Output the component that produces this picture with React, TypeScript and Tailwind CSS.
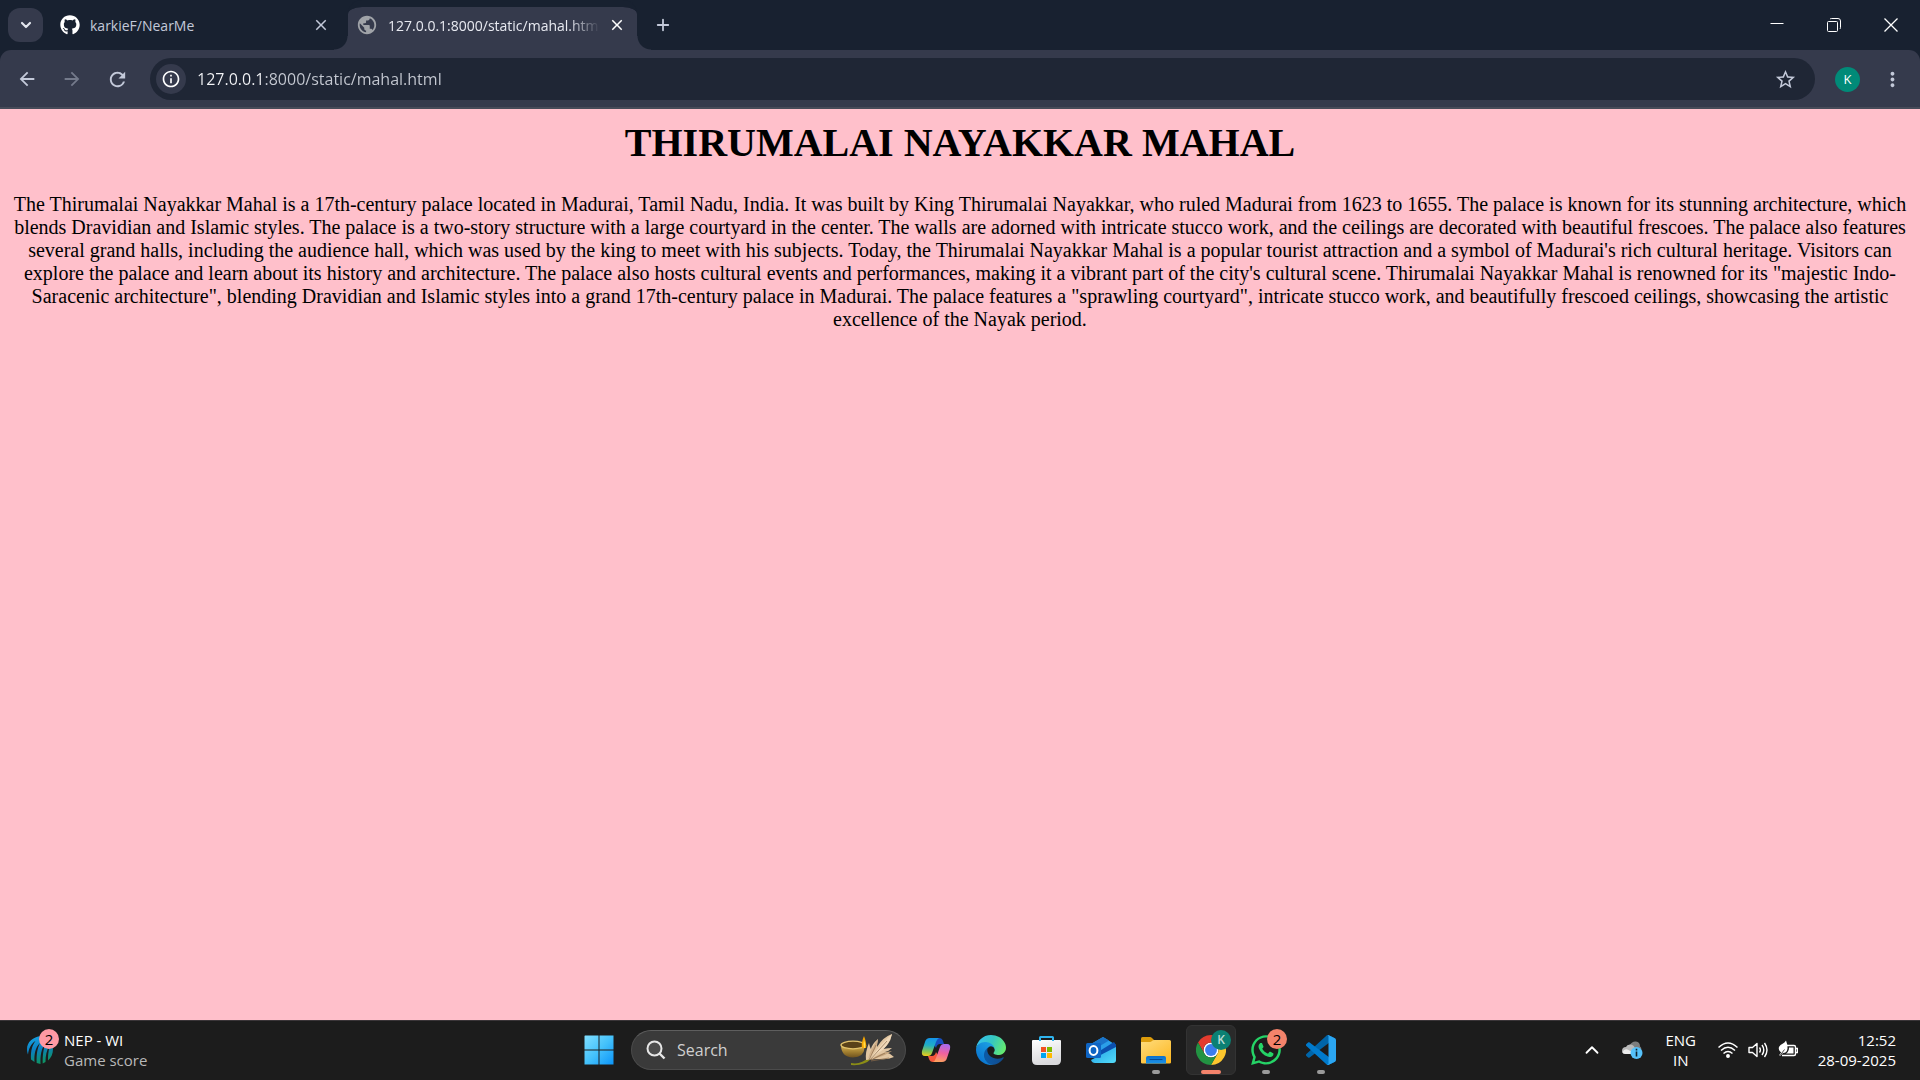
import React from "react";
import { FaGithub, FaWhatsapp } from "react-icons/fa";
import {
  MdArrowBack,
  MdArrowForward,
  MdClose,
  MdInfoOutline,
  MdMoreVert,
  MdPublic,
  MdRefresh,
  MdStarBorder,
} from "react-icons/md";
import { ChevronDown, ChevronUp, Plus } from "lucide-react";

function TabStrip() {
  return (
    <header className="flex h-[50px] items-center bg-[#182130] pl-2 text-[#c3c9d9]">
      <button
        aria-label="Search tabs"
        className="flex h-[34px] w-[35px] shrink-0 items-center justify-center rounded-xl bg-[#353a4c] text-[#e3e6ee]"
      >
        <ChevronDown size={16} strokeWidth={3.2} />
      </button>

      <div className="ml-[17px] flex w-[288px] items-center">
        <FaGithub size={20} className="shrink-0 text-white" />
        <span className="ml-[10px] flex-1 pt-0.5 text-[14px] leading-5">karkieF/NearMe</span>
        <button aria-label="Close karkieF/NearMe" className="mr-[18px]">
          <MdClose size={18} />
        </button>
      </div>

      <div className="relative flex w-[289px] items-center self-stretch rounded-t-[14px] border-t-[7px] border-[#182130] bg-[#353a4c] bg-clip-padding pb-[7px] pl-2 text-white">
        <span className="absolute -left-[14px] bottom-0 h-[14px] w-[14px] bg-[radial-gradient(circle_at_0_0,transparent_13px,#353a4c_14px)]" />
        <span className="absolute -right-[14px] bottom-0 h-[14px] w-[14px] bg-[radial-gradient(circle_at_100%_0,transparent_13px,#353a4c_14px)]" />
        <MdPublic size={22} className="shrink-0 text-[#a0a3a8]" />
        <span className="ml-[10px] w-[210px] overflow-hidden pt-0.5 text-[14px] leading-5 whitespace-nowrap text-[#e8eaf1] [mask-image:linear-gradient(90deg,#000_180px,transparent_212px)]">
          127.0.0.1:8000/static/mahal.html
        </span>
        <button aria-label="Close 127.0.0.1:8000" className="ml-[10px]">
          <MdClose size={18} />
        </button>
      </div>

      <button aria-label="New tab" className="ml-4 flex h-8 w-5 items-center justify-center">
        <Plus size={18} strokeWidth={2.4} />
      </button>

      <div className="ml-auto flex self-stretch pr-px text-white">
        <button aria-label="Minimize" className="flex w-[57px] items-center justify-center">
          <svg width="14" height="14" viewBox="0 0 14 14" className="mb-1">
            <path d="M0.5 7.5h13" stroke="currentColor" />
          </svg>
        </button>
        <button aria-label="Restore" className="flex w-[57px] items-center justify-center">
          <svg width="14" height="14" viewBox="0 0 14 14" fill="none" stroke="currentColor">
            <rect x="0.5" y="3.5" width="10" height="10" rx="1" />
            <path d="M3 1.2Q3.4 0.5 4.5 0.5H11Q13.5 0.5 13.5 3V9.5Q13.5 10.6 12.8 11" />
          </svg>
        </button>
        <button aria-label="Close window" className="flex w-[57px] items-center justify-center">
          <svg width="14" height="14" viewBox="0 0 14 14" stroke="currentColor" strokeWidth="1.3">
            <path d="M0.5 0.5l13 13M13.5 0.5l-13 13" />
          </svg>
        </button>
      </div>
    </header>
  );
}

function Toolbar() {
  return (
    <div className="bg-[#182130]">
      <nav className="flex items-center rounded-t-[11px] border-b-2 border-[#474b59] bg-[#353a4c] pt-2 pr-4 pb-[7px] pl-4 text-[#c3c9d9]">
        <button aria-label="Back" className="w-[45px]">
          <MdArrowBack size={22} />
        </button>
        <button aria-label="Forward" className="w-[45px] text-[#747a8b]">
          <MdArrowForward size={22} />
        </button>
        <button aria-label="Reload" className="w-[44px]">
          <MdRefresh size={23} />
        </button>
        <div className="flex h-[42px] flex-1 items-center rounded-full bg-[#1f2635] pr-[18px] pl-[6px]">
          <button
            aria-label="Site information"
            className="flex h-[30px] w-[30px] items-center justify-center rounded-full bg-[#353a4c] text-white"
          >
            <MdInfoOutline size={20} />
          </button>
          <input
            aria-label="Address"
            defaultValue="127.0.0.1:8000/static/mahal.html"
            className="ml-[11px] min-w-0 flex-1 bg-[linear-gradient(90deg,#f4f5f8_66px,#c6cad3_66px)] bg-clip-text text-[16px] leading-6 text-transparent outline-none"
          />
          <button aria-label="Bookmark this page">
            <MdStarBorder size={23} />
          </button>
        </div>
        <button
          aria-label="Profile"
          className="ml-5 flex h-[25px] w-[25px] items-center justify-center rounded-full bg-[#018a78] text-[13px] leading-none text-white"
        >
          K
        </button>
        <button aria-label="Menu" className="ml-[21px]">
          <MdMoreVert size={23} />
        </button>
      </nav>
    </div>
  );
}

function Page() {
  return (
    <main className="flex-1 bg-[#ffc0cb] px-[10px] pt-[11px] text-center font-['Liberation_Serif',serif] text-black">
      <h1 className="text-[40px] leading-[46px] font-bold">THIRUMALAI NAYAKKAR MAHAL</h1>
      <p className="mt-[27px] text-[20px] leading-[23px]">
        The Thirumalai Nayakkar Mahal is a 17th-century palace located in Madurai, Tamil Nadu, India. It was built by
        King Thirumalai Nayakkar, who ruled Madurai from 1623 to 1655. The palace is known for its stunning
        architecture, which blends Dravidian and Islamic styles. The palace is a two-story structure with a large
        courtyard in the center. The walls are adorned with intricate stucco work, and the ceilings are decorated with
        beautiful frescoes. The palace also features several grand halls, including the audience hall, which was used
        by the king to meet with his subjects. Today, the Thirumalai Nayakkar Mahal is a popular tourist attraction and
        a symbol of Madurai's rich cultural heritage. Visitors can explore the palace and learn about its history and
        architecture. The palace also hosts cultural events and performances, making it a vibrant part of the city's
        cultural scene. Thirumalai Nayakkar Mahal is renowned for its "majestic Indo-Saracenic architecture", blending
        Dravidian and Islamic styles into a grand 17th-century palace in Madurai. The palace features a "sprawling
        courtyard", intricate stucco work, and beautifully frescoed ceilings, showcasing the artistic excellence of the
        Nayak period.
      </p>
    </main>
  );
}

function CricketIcon() {
  return (
    <svg width="28" height="30" viewBox="0 0 28 30">
      <defs>
        <linearGradient id="cricket" x1="0.2" y1="0" x2="0.5" y2="1">
          <stop offset="0" stopColor="#16a5e6" />
          <stop offset="0.5" stopColor="#0b7fc0" />
          <stop offset="1" stopColor="#0e9460" />
        </linearGradient>
      </defs>
      <path
        fill="url(#cricket)"
        d="M15 1C7 2 1 7 1 14c0 2 .3 4 1 5.500C2.500 14 5 8.500 9.500 6 6.500 10 4.500 15 5 24.500l3.500 2.500C8 19 9.500 12 14 8c-2.500 5-3.700 11-3.300 20l3.800 1C14 21 15.500 13 19 9c-1.500 6-2.500 11-2.300 19.500l2.800-1.500C19.500 21 20.500 15 23.500 11c-.8 5-1.500 8-1.500 14.500C25 23 27 19 27 14 27 6 22 0 15 1Z"
      />
    </svg>
  );
}

function StartIcon() {
  return (
    <svg width="30" height="30" viewBox="0 0 30 30">
      <defs>
        <linearGradient id="start" gradientUnits="userSpaceOnUse" x1="0" y1="0" x2="30" y2="30">
          <stop offset="0" stopColor="#83e0ff" />
          <stop offset="0.5" stopColor="#45c2fb" />
          <stop offset="1" stopColor="#0a93f8" />
        </linearGradient>
      </defs>
      <path fill="url(#start)" d="M1 .5h13.500v14H.5V1zM15.500 .5h14v14h-14zM.5 15.500h14v14H.5zM15.500 15.500h14v14h-14z" />
    </svg>
  );
}

function LampIcon() {
  return (
    <svg width="58" height="32" viewBox="0 0 58 32">
      <defs>
        <linearGradient id="bowl" x1="0" y1="0" x2="0" y2="1">
          <stop offset="0" stopColor="#dcb653" />
          <stop offset="0.6" stopColor="#9c7a2e" />
          <stop offset="1" stopColor="#70531f" />
        </linearGradient>
      </defs>
      <path d="M12 29q10 2 18-6l2 2q-7 7-20 6z" fill="#8b8d16" />
      <g fill="#e2c6a2">
        <path d="M27 26q-1-8 3-17 1 5 2 6 1-5 7-10-1 5-1 8 6-10 15-13-1 6-4 10l-5 5q5-1 9-1-3 3-7 4 5 1 9 5-7 3-14 2-8 0-14 1z" />
        <path d="M29 25q2-9 10-20-1 8-4 12z" fill="#cfae88" />
        <path d="M32 25q4-9 21-25-4 14-14 19z" fill="#f0d9ba" />
        <path d="M32 26q8-7 21-9-8 5-13 6z" fill="#c7a57d" />
      </g>
      <path d="M30 26l7-15M31 26l17-19M32 26l14-7M32 27l18-3" stroke="#8d6b4b" strokeWidth=".7" />
      <path d="M2 11q0 12 12 12.500Q25 23 25.500 14l2-2.500z" fill="url(#bowl)" />
      <ellipse cx="14" cy="11" rx="12" ry="3.800" fill="#594219" stroke="#e3c46c" strokeWidth="1.300" />
      <path d="M23 14q-1-5 2-12 3 8 2 12z" fill="#f9a800" />
      <path d="M25 14q-1-4 0-8 2 4 1 8z" fill="#ffdf52" />
    </svg>
  );
}

function CopilotIcon() {
  return (
    <svg width="30" height="28" viewBox="0 0 30 28">
      <defs>
        <linearGradient id="copBlue" x1="0.4" y1="0" x2="0.3" y2="1">
          <stop offset="0" stopColor="#1595e8" />
          <stop offset="0.4" stopColor="#21aec4" />
          <stop offset="0.75" stopColor="#86c553" />
          <stop offset="1" stopColor="#eecb1c" />
        </linearGradient>
        <linearGradient id="copPink" x1="0.6" y1="0" x2="0.4" y2="1">
          <stop offset="0" stopColor="#a86af0" />
          <stop offset="0.5" stopColor="#f0619f" />
          <stop offset="1" stopColor="#fba05e" />
        </linearGradient>
      </defs>
      <path d="M15 2h3q3 0 4 3l1 3h-4q-3 0-4 4l-3-5z" fill="#174ebf" />
      <path d="M15 26h-3q-3 0-4-3l-1-3h4q3 0 4-4l3 5z" fill="#f4573d" />
      <path d="M9 2h9q-2 1-3 4l-4 11q-1 3-4 3H4q-4 0-3-5L4 6q1-4 5-4Z" fill="url(#copBlue)" />
      <path d="M21 26h-9q2-1 3-4l4-11q1-3 4-3h3q4 0 3 5l-3 9q-1 4-5 4Z" fill="url(#copPink)" />
    </svg>
  );
}

function EdgeIcon() {
  return (
    <svg width="30" height="30" viewBox="0 0 256 256">
      <defs>
        <linearGradient id="edgeDark" x1="0.2" y1="0.5" x2="1" y2="0.5">
          <stop offset="0" stopColor="#0c59a4" />
          <stop offset="1" stopColor="#114a8b" />
        </linearGradient>
        <linearGradient id="edgeBlue" x1="0.8" y1="0.2" x2="0.3" y2="0.9">
          <stop offset="0" stopColor="#1b9de2" />
          <stop offset="1" stopColor="#0b76d0" />
        </linearGradient>
        <linearGradient id="edgeGreen" x1="0" y1="0.3" x2="1" y2="0.6">
          <stop offset="0" stopColor="#35c1f1" />
          <stop offset="0.5" stopColor="#36c7c0" />
          <stop offset="1" stopColor="#66eb6e" />
        </linearGradient>
      </defs>
      <g transform="translate(-4.630 -4.920)">
        <path
          fill="url(#edgeDark)"
          d="M235.680 195.460a93.730 93.730 0 0 1-10.540 4.710 101.870 101.870 0 0 1-35.900 6.460c-47.320 0-88.540-32.550-88.540-74.320A31.480 31.480 0 0 1 117.130 105c-42.800 1.800-53.800 46.400-53.800 72.530 0 73.880 68.090 81.370 82.760 81.370 7.910 0 19.840-2.300 27-4.560l1.310-.44a128.340 128.340 0 0 0 66.600-52.800 4 4 0 0 0-5.320-5.640Z"
        />
        <path
          fill="url(#edgeBlue)"
          d="M114.970 251.260A79.200 79.200 0 0 1 92.230 229.920 80.720 80.720 0 0 1 117.130 105c3.120-1.470 8.450-4.130 15.540-4a32.350 32.350 0 0 1 25.690 13 31.880 31.880 0 0 1 6.360 18.660c0-.21 24.460-79.600-80-79.600-43.900 0-80 41.660-80 78.210a130.150 130.150 0 0 0 12.110 56 128 128 0 0 0 156.380 67.110 75.550 75.550 0 0 1-58.240-3.120Z"
        />
        <path
          fill="url(#edgeGreen)"
          d="M156.940 153.780c-.81 1.050-3.300 2.500-3.300 5.660 0 2.610 1.700 5.120 4.720 7.230 14.380 10 41.490 8.680 41.560 8.680a59.560 59.560 0 0 0 30.270-8.350 61.380 61.380 0 0 0 30.430-52.880c.26-22.410-8-37.310-11.340-43.910C228.090 28.760 182.350 4.920 132.610 4.920a128 128 0 0 0-128 126.200c.48-36.540 36.800-66.050 80-66.050 3.500 0 23.460.34 42 10.070 16.340 8.580 24.900 18.940 30.850 29.210 6.180 10.670 7.280 24.150 7.280 29.520s-2.740 13.330-7.800 19.910Z"
        />
      </g>
    </svg>
  );
}

function StoreIcon() {
  return (
    <svg width="30" height="30" viewBox="0 0 30 30">
      <defs>
        <linearGradient id="bag" x1="0" y1="0" x2="0.3" y2="1">
          <stop offset="0" stopColor="#ffffff" />
          <stop offset="1" stopColor="#d9d9dc" />
        </linearGradient>
      </defs>
      <path d="M1 6q0-1 1-1h27q1 0 1 1v19q0 5-5 5H6q-5 0-5-5z" fill="url(#bag)" />
      <path d="M9 6V2.500Q9 2 9.500 2h12q.5 0 .5.500V6" fill="none" stroke="#2fb4ee" strokeWidth="2" />
      <path d="M10 12h5v5h-5z" fill="#f25022" />
      <path d="M16 12h5v5h-5z" fill="#7fba00" />
      <path d="M10 18h5v5h-5z" fill="#00a4ef" />
      <path d="M16 18h5v5h-5z" fill="#ffb900" />
    </svg>
  );
}

function OutlookIcon() {
  return (
    <svg width="30" height="30" viewBox="0 0 30 30">
      <defs>
        <linearGradient id="mail" x1="0" y1="0" x2="1" y2="1">
          <stop offset="0" stopColor="#1f9de5" />
          <stop offset="1" stopColor="#54dcf8" />
        </linearGradient>
      </defs>
      <path d="M5 9 17 2l13 8v4L12 22 5 18z" fill="#2b9fe8" />
      <path d="M17 2l6 3.500L8 14.500 5 9z" fill="#1a73c9" />
      <path d="M28 7l2 3v4L15 23l-3-6z" fill="#0b4fae" />
      <path d="M30 12v13q0 3-3 3H9q-3 0-4-3z" fill="url(#mail)" />
      <rect x="0" y="8" width="15" height="15" rx="1.500" fill="#0f65c4" />
      <ellipse cx="7.500" cy="15.500" rx="3.900" ry="4.400" fill="none" stroke="#fff" strokeWidth="2" />
    </svg>
  );
}

function FolderIcon() {
  return (
    <svg width="30" height="30" viewBox="0 0 30 30">
      <defs>
        <linearGradient id="folder" x1="0" y1="0" x2="0.8" y2="1">
          <stop offset="0" stopColor="#ffdc7d" />
          <stop offset="1" stopColor="#fdb925" />
        </linearGradient>
        <linearGradient id="tray" x1="0" y1="0" x2="0" y2="1">
          <stop offset="0" stopColor="#0f6fc9" />
          <stop offset="1" stopColor="#1b93e8" />
        </linearGradient>
      </defs>
      <path d="M0 3.500Q0 2 1.500 2H9q1 0 2 1l2 2v6H0z" fill="#dd9c0b" />
      <path d="M0 7h9q1 0 2-1l1-.7Q12.500 5 13.500 5h15Q30 5 30 6.500v21q0 1-1.500 1h-27Q0 28.500 0 27.500z" fill="url(#folder)" />
      <path d="M5 28.500V23q0-2 2-2h16q2 0 2 2v5.500z" fill="url(#tray)" />
      <path d="M9 24.500h12" stroke="#084a94" strokeWidth="1.200" strokeLinecap="round" />
    </svg>
  );
}

function ChromeIcon() {
  return (
    <svg width="30" height="30" viewBox="0 0 48 48">
      <circle cx="24" cy="24" r="12" fill="#fff" />
      <path
        fill="#e33b2e"
        d="M24 12H44.781a23.994 23.994 0 0 0-41.564.003L13.608 30l.009-.002A11.985 11.985 0 0 1 24 12Z"
      />
      <path
        fill="#fcc62d"
        d="M34.391 30.003 24.001 48A23.994 23.994 0 0 0 44.780 12.003H23.999l-.003.009A11.985 11.985 0 0 1 34.391 30.003Z"
      />
      <path
        fill="#229342"
        d="M13.609 30.003 3.218 12.006A23.994 23.994 0 0 0 24.003 48L34.393 30.003l-.007-.007a11.985 11.985 0 0 1-20.778.007Z"
      />
      <circle cx="24" cy="24" r="9.500" fill="#3b7ded" />
    </svg>
  );
}

function CodeIcon() {
  return (
    <svg width="30" height="30" viewBox="0 0 100 100">
      <path
        fill="#0065a9"
        d="M96.461 10.796L75.857.876C73.472-.273 70.622.212 68.750 2.083L1.299 63.583C-.516 65.237-.514 68.094 1.303 69.745L6.813 74.754C8.298 76.104 10.535 76.204 12.134 74.991L93.361 13.370C96.086 11.303 100 13.246 100 16.667V16.428C100 14.027 98.625 11.838 96.461 10.796Z"
      />
      <path
        fill="#007acc"
        d="M96.461 89.204L75.857 99.125C73.472 100.273 70.622 99.788 68.750 97.917L1.299 36.417C-.516 34.763-.514 31.906 1.303 30.255L6.813 25.246C8.298 23.896 10.535 23.796 12.134 25.010L93.361 86.630C96.086 88.697 100 86.754 100 83.333V83.573C100 85.974 98.625 88.162 96.461 89.204Z"
      />
      <path
        fill="#2ba6f2"
        d="M75.858 99.126C73.472 100.274 70.622 99.789 68.750 97.917C71.056 100.223 75 98.590 75 95.328V4.672C75 1.410 71.056-.223 68.750 2.083C70.622.211 73.472-.274 75.858.874L96.459 10.781C98.623 11.822 100 14.011 100 16.413V83.587C100 85.989 98.623 88.179 96.459 89.220L75.858 99.126Z"
      />
    </svg>
  );
}

type AppButtonProps = {
  label: string;
  children: React.ReactNode;
  state?: "open" | "active";
  badge?: React.ReactNode;
};

function AppButton({ label, children, state, badge }: AppButtonProps) {
  return (
    <button
      aria-label={label}
      className={
        state === "active"
          ? "relative flex h-[50px] w-[50px] items-center justify-center rounded-md border border-[#333333] bg-[#2a2a2a]"
          : "relative flex h-[50px] w-[50px] items-center justify-center"
      }
    >
      {children}
      {badge}
      {state === "open" && <span className="absolute bottom-[1px] h-1 w-2 rounded-full bg-[#9a9a9a]" />}
      {state === "active" && <span className="absolute bottom-0 h-1 w-5 rounded-full bg-[#f4836b]" />}
    </button>
  );
}

function Taskbar() {
  return (
    <footer className="grid h-[60px] grid-cols-[1fr_auto_1fr] items-center border-t border-[#3a3538] bg-[#1c1c1c] pb-px text-[15px] leading-5 text-white">
      <button className="flex items-center pl-[26px] text-left">
        <span className="relative">
          <CricketIcon />
          <span className="absolute -top-[6px] left-[13px] flex h-5 w-5 items-center justify-center rounded-full bg-[#ff99a4] text-[15px] leading-5 text-black">
            2
          </span>
        </span>
        <span className="ml-[10px]">
          <span className="block">NEP - WI</span>
          <span className="block text-[#b8b8b8]">Game score</span>
        </span>
      </button>

      <div className="flex items-center gap-[5px]">
        <AppButton label="Start">
          <StartIcon />
        </AppButton>
        <label className="ml-[2px] flex h-10 w-[275px] items-center rounded-full border border-[#4b4b4b] border-t-[#5e5e5e] bg-[#3a3a3a] pr-2 pl-[14px]">
          <svg width="20" height="20" viewBox="0 0 20 20" fill="none" stroke="#e6e6e6" strokeWidth="2">
            <circle cx="8.500" cy="8.500" r="7" fill="#4c4c4c" />
            <path d="M13.500 13.500l5 5" strokeWidth="2.400" />
          </svg>
          <input
            aria-label="Search"
            placeholder="Search"
            className="ml-[11px] w-0 min-w-0 flex-1 bg-transparent text-[16px] leading-6 outline-none placeholder:text-[#cfcfcf]"
          />
          <LampIcon />
        </label>
        <AppButton label="Copilot">
          <CopilotIcon />
        </AppButton>
        <AppButton label="Edge">
          <EdgeIcon />
        </AppButton>
        <AppButton label="Microsoft Store">
          <StoreIcon />
        </AppButton>
        <AppButton label="Outlook">
          <OutlookIcon />
        </AppButton>
        <AppButton label="File Explorer" state="open">
          <FolderIcon />
        </AppButton>
        <AppButton
          label="Chrome"
          state="active"
          badge={
            <span className="absolute top-1 right-1 flex h-5 w-5 items-center justify-center rounded-full bg-[#0b8073] text-[12px] leading-none font-semibold text-[#b9dcd6]">
              K
            </span>
          }
        >
          <ChromeIcon />
        </AppButton>
        <AppButton
          label="WhatsApp"
          state="open"
          badge={
            <span className="absolute top-1 right-1 flex h-5 w-5 items-center justify-center rounded-full bg-[#f4836b] text-[15px] leading-none text-black">
              2
            </span>
          }
        >
          <FaWhatsapp size={34} color="#25d366" />
        </AppButton>
        <AppButton label="Visual Studio Code" state="open">
          <CodeIcon />
        </AppButton>
      </div>

      <div className="flex items-center justify-end pr-6">
        <button aria-label="Show hidden icons">
          <ChevronUp size={22} strokeWidth={2} />
        </button>
        <button aria-label="OneDrive" className="ml-[18px]">
          <svg width="22" height="22" viewBox="0 0 22 22">
            <path d="M9 6q2-4 6-3.500 4 .5 4 5 2 1 1 5H9z" fill="#7d7d7d" />
            <path d="M1 12q0-4 4-4 1-3 5-2.500 4 1 4 5 3 0 3 4H4q-3 0-3-2.500z" fill="#b9b9b9" />
            <path d="M1.500 13q2-4 6-2l7 4H4q-2.500 0-2.500-2z" fill="#ececec" />
            <circle cx="15.500" cy="14" r="6" fill="#56c2fb" />
            <path d="M15.500 12.500v5M15.500 9.800v1.700" stroke="#10242f" strokeWidth="1.600" />
          </svg>
        </button>
        <button className="ml-[21px] w-[34px] text-center">
          ENG
          <br />
          IN
        </button>
        <button aria-label="Network, volume and battery" className="ml-5 flex items-center gap-[10px]">
          <svg width="20" height="20" viewBox="0 0 20 20" fill="none" stroke="#fff" strokeWidth="1.500">
            <path d="M.5 7.500Q10-1.500 19.500 7.500M3 10.500q7-6.500 14 0M5.500 13.500q4.500-4 9 0" />
            <circle cx="10" cy="16" r="1.200" fill="#fff" />
          </svg>
          <svg width="20" height="20" viewBox="0 0 20 20" fill="none" stroke="#fff" strokeWidth="1.400">
            <path d="M1 7.500h3.500L9 3.500v13L4.500 12.500H1z" strokeLinejoin="round" />
            <path d="M11.500 7.500q1.800 2.500 0 5M14 5q3.600 5 0 10M16.500 3q5 7 0 14" />
          </svg>
          <svg width="20" height="20" viewBox="0 0 20 20" fill="none" stroke="#fff" strokeWidth="1.400">
            <path d="M9 5.500h7q1.500 0 1.500 1.500v7q0 1.500-1.500 1.500H4" />
            <path d="M18 8.500h1.500v4H18" />
            <path d="M11 7.500h4.500v6H8q3-2 3-6z" fill="#fff" stroke="none" />
            <path d="M8 .5q2 5 1.500 8-.5 4.500-4.500 4.500l-3 3-.8-1 2-2.500Q0 10 1 7q1-2.500 4-3.500 2-1 3-3z" fill="#fff" stroke="none" />
            <path d="M2 15.500l4.500-6" stroke="#1c1c1c" strokeWidth=".8" />
          </svg>
        </button>
        <button className="ml-5 text-right">
          12:52
          <br />
          28-09-2025
        </button>
      </div>
    </footer>
  );
}

export default function App() {
  return (
    <div className="flex min-h-screen flex-col font-['Open_Sans','Noto_Sans',sans-serif]">
      <TabStrip />
      <Toolbar />
      <Page />
      <Taskbar />
    </div>
  );
}
